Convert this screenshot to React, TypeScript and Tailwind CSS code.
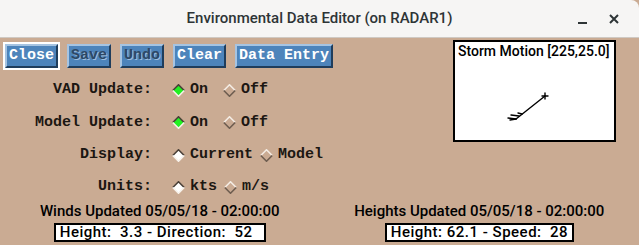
import React from "react";

const mono = "font-['Liberation_Mono',monospace] font-bold text-[15px] leading-[16px]";
const sans = "font-['Roboto','Liberation_Sans',sans-serif]";

const buttons = [
  { label: "Close", focus: true, disabled: false },
  { label: "Save", focus: false, disabled: true },
  { label: "Undo", focus: false, disabled: true },
  { label: "Clear", focus: false, disabled: false },
  { label: "Data Entry", focus: false, disabled: false },
];

function Diamond({ kind }: { kind: "green" | "white" | "off" }) {
  const fill = kind === "green" ? "#22f022" : kind === "white" ? "#ffffff" : "#caab93";
  const tl = kind === "off" ? "#f4ece4" : "#4a4038";
  const br = kind === "off" ? "#6e5d50" : "#f7f1ea";
  return (
    <svg width="13" height="13" viewBox="0 0 13 13" className="shrink-0">
      <polygon points="6.5,0.5 12.5,6.5 6.5,12.5 0.5,6.5" fill={fill} />
      <polyline points="0.8,6.5 6.5,0.8 12.2,6.5" fill="none" stroke={tl} strokeWidth="1.6" />
      <polyline points="0.8,6.5 6.5,12.2 12.2,6.5" fill="none" stroke={br} strokeWidth="1.6" />
    </svg>
  );
}

function Toggle({ label, kind, first }: { label: string; kind: "green" | "white" | "off"; first?: boolean }) {
  return (
    <div className={`flex items-center gap-[5px] ${first ? "min-w-[44px]" : ""}`}>
      <Diamond kind={kind} />
      <span>{label}</span>
    </div>
  );
}

const rows: { label: string; h: string; opts: [string, "green" | "white" | "off"][] }[] = [
  { label: "VAD Update:", h: "h-[32px]", opts: [["On", "green"], ["Off", "off"]] },
  { label: "Model Update:", h: "h-[33px]", opts: [["On", "green"], ["Off", "off"]] },
  { label: "Display:", h: "h-[32px]", opts: [["Current", "white"], ["Model", "off"]] },
  { label: "Units:", h: "h-[32px]", opts: [["kts", "white"], ["m/s", "off"]] },
];

export default function App() {
  return (
    <div className="w-[639px] h-[245px] bg-[#caab93] overflow-hidden flex flex-col">
      {/* window title bar */}
      <div className="h-[38px] shrink-0 bg-[#f6f5f4] border-b border-[#cfc9c3] rounded-tr-[8px] flex items-center relative">
        <div className={`${sans} flex-1 text-center text-[15px] font-medium text-[#2e3436]`}>
          Environmental Data Editor (on RADAR1)
        </div>
        <div className="absolute right-[20px] top-0 h-full flex items-center gap-[22px] text-[#2e3436]">
          <span className="block w-[9px] h-[2px] bg-[#2e3436] mt-[8px]" />
          <svg width="10" height="10" viewBox="0 0 10 10">
            <path d="M1 1 L9 9 M9 1 L1 9" stroke="#2e3436" strokeWidth="2" />
          </svg>
        </div>
      </div>

      <div className="flex">
        <div className="flex flex-col pl-[3px] pt-[4px]">
          <div className="flex gap-[5px]">
            {buttons.map((b) => (
              <div
                key={b.label}
                className={`border-2 ${b.focus ? "border-white" : "border-transparent"}`}
              >
                <div
                  className={`${mono} bg-[#4d84bb] border-2 border-t-[#a6c4e2] border-l-[#a6c4e2] border-b-[#1f3d5c] border-r-[#1f3d5c] px-[2px] py-[2px] ${
                    b.disabled
                      ? "text-[#2d4866] [text-shadow:1px_1px_0_#9dbcdc]"
                      : "text-white"
                  }`}
                >
                  <span className="whitespace-pre">{b.label}</span>
                </div>
              </div>
            ))}
          </div>

          <div className={`${mono} text-[#1c1712] grid grid-cols-[149px_auto] gap-x-[20px] mt-[4px]`}>
            {rows.map((r) => (
              <React.Fragment key={r.label}>
                <div className={`${r.h} flex items-center justify-end`}>{r.label}</div>
                <div className={`${r.h} flex items-center gap-[7px]`}>
                  <Toggle label={r.opts[0][0]} kind={r.opts[0][1]} first />
                  <Toggle label={r.opts[1][0]} kind={r.opts[1][1]} />
                </div>
              </React.Fragment>
            ))}
          </div>
        </div>

        {/* storm motion panel */}
        <div className="ml-auto mr-[23px] mt-[2px] w-[163px] h-[102px] bg-white border-2 border-black relative">
          <div className={`${sans} font-medium text-[14px] leading-[16px] text-black pl-[3px] pt-[1px]`}>
            Storm Motion [225,25.0]
          </div>
          <svg className="absolute left-0 top-0" width="159" height="98" viewBox="0 0 159 98">
            <g stroke="#000" strokeWidth="1.4" fill="none" strokeLinecap="round">
              <path d="M90 54 L61 77" />
              <path d="M87 54 L93 54 M90 51 L90 57" />
              <path d="M61 77 L53 76" />
              <path d="M64 74 L56 73" />
              <path d="M67 72 L63 71" />
              <path d="M61 77 L55 78" />
            </g>
          </svg>
        </div>
      </div>

      <div className={`${sans} font-medium text-black grid grid-cols-2 mt-auto mb-[5px]`}>
        <div className="flex flex-col items-center">
          <div className="text-[15px] leading-[16px]">Winds Updated 05/05/18 - 02:00:00</div>
          <div className="mt-[4px] w-[212px] h-[19px] bg-white border-2 border-black text-[15px] tracking-[0.5px] leading-[15px] pl-[4px] whitespace-pre">
            Height:  3.3 - Direction:  52
          </div>
        </div>
        <div className="flex flex-col items-center">
          <div className="text-[15px] leading-[16px]">Heights Updated 05/05/18 - 02:00:00</div>
          <div className="mt-[4px] w-[189px] h-[19px] bg-white border-2 border-black text-[15px] tracking-[0.5px] leading-[15px] pl-[4px] whitespace-pre">
            Height: 62.1 - Speed:  28
          </div>
        </div>
      </div>
    </div>
  );
}
